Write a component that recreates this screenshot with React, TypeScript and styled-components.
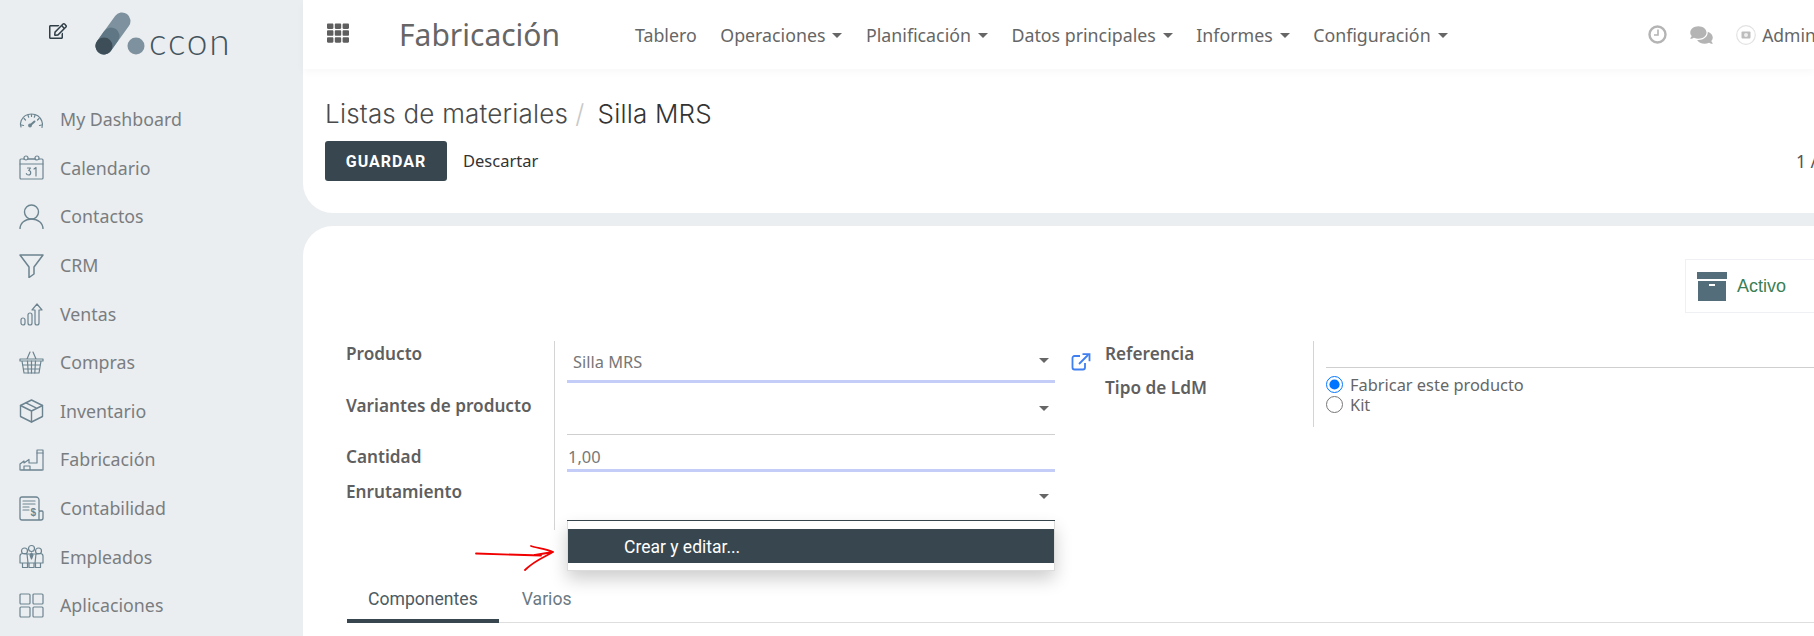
import React from 'react';
import styled, { createGlobalStyle } from 'styled-components';
import { FaTh, FaRegEdit, FaComments } from 'react-icons/fa';

const Global = createGlobalStyle`
  html, body { margin: 0; padding: 0; background: #ebeef1; overflow: hidden; }
  body { font-family: "Noto Sans", "Open Sans", sans-serif; }
  #root { width: 1814px; height: 636px; }
`;

const Page = styled.div`
  display: flex;
  width: 1814px;
  height: 636px;
  overflow: hidden;
  background: #ebeef1;
`;

const Sidebar = styled.aside`
  width: 303px;
  flex: none;
  display: flex;
  flex-direction: column;
`;

const LogoRow = styled.div`
  height: 95px;
  display: flex;
  align-items: flex-start;
  padding-left: 49px;
  box-sizing: border-box;
`;

const EditIcon = styled(FaRegEdit)`
  width: 18px;
  height: 16px;
  margin-top: 23px;
  color: #2f3e47;
`;

const LogoMark = styled.svg`
  width: 50px;
  height: 60px;
  margin-left: 28px;
  margin-top: 8px;
  flex: none;
`;

const LogoText = styled.span`
  font-family: "Lato", sans-serif;
  font-weight: 300;
  font-size: 37px;
  line-height: 1;
  letter-spacing: 1.8px;
  color: #43545e;
  margin-left: 4px;
  margin-top: 22px;
`;

const Menu = styled.nav`
  display: flex;
  flex-direction: column;
`;

const MenuItem = styled.div`
  height: 48.6px;
  display: flex;
  align-items: center;
  padding-left: 19px;
  gap: 16px;
  font-size: 17.8px;
  color: #7a7d80;
`;

const MenuIcon = styled.svg`
  width: 25px;
  height: 25px;
  flex: none;
  fill: none;
  stroke: #6c8490;
  stroke-width: 1.2;
  stroke-linecap: round;
  stroke-linejoin: round;
`;

const Main = styled.main`
  flex: 1;
  min-width: 0;
  display: flex;
  flex-direction: column;
`;

const TopBar = styled.header`
  height: 69px;
  flex: none;
  background: #fff;
  display: flex;
  align-items: center;
  white-space: nowrap;
  position: relative;
  z-index: 1;
  box-shadow: 0 3px 8px rgba(0, 0, 0, 0.03);
`;

const GridIcon = styled(FaTh)`
  width: 22px;
  height: 22px;
  margin-left: 24px;
  margin-top: -4px;
  flex: none;
  color: #5f5f5f;
`;

const AppName = styled.div`
  font-size: 30px;
  color: #666;
  margin-left: 50px;
  width: 236px;
  flex: none;
`;

const NavItem = styled.div`
  font-size: 17.8px;
  color: #666;
  display: flex;
  align-items: center;
  margin-right: 23.5px;
`;

const Caret = styled.i`
  display: inline-block;
  width: 0;
  height: 0;
  border-left: 5px solid transparent;
  border-right: 5px solid transparent;
  border-top: 5px solid #666;
  margin-left: 7px;
  margin-top: 2px;
`;

const Systray = styled.div`
  display: flex;
  align-items: center;
  margin-left: 177px;
  color: #b4b4b4;
`;

const ChatIcon = styled(FaComments)`
  width: 23px;
  height: 20px;
  margin-left: 23px;
`;

const AvatarIcon = styled.svg`
  width: 20px;
  height: 20px;
  margin-left: 23px;
`;

const UserName = styled.span`
  margin-left: 6px;
  font-size: 17.5px;
  color: #666;
`;

const ControlPanel = styled.section`
  height: 144px;
  flex: none;
  box-sizing: border-box;
  background: #fff;
  border-bottom-left-radius: 30px;
  padding: 28px 0 0 22px;
`;

const Breadcrumb = styled.div`
  height: 44px;
  display: flex;
  align-items: baseline;
  font-family: "Inter", sans-serif;
  font-weight: 300;
  font-size: 26px;
  letter-spacing: 0.2px;
  line-height: 34px;
  color: #4a4a4a;
  white-space: nowrap;
`;

const Slash = styled.span`
  color: #c8c8c8;
  margin: 0 13px 0 7px;
`;

const Current = styled.span`
  color: #333;
`;

const ActionRow = styled.div`
  display: flex;
  align-items: center;
`;

const SaveButton = styled.button`
  width: 122px;
  height: 40px;
  flex: none;
  border: none;
  border-radius: 3px;
  background: #38474f;
  color: #fff;
  font-family: "Roboto", sans-serif;
  font-weight: 700;
  font-size: 16px;
  letter-spacing: 1px;
  padding: 0;
`;

const DiscardButton = styled.span`
  font-family: "Noto Sans", sans-serif;
  font-size: 16.5px;
  color: #333;
  margin: 0 0 2px 16px;
  width: 1333px;
  flex: none;
`;

const Pager = styled.span`
  font-size: 17.5px;
  color: #555;
  white-space: nowrap;
`;

const FormCard = styled.section`
  margin-top: 13px;
  flex: 1;
  min-height: 0;
  background: #fff;
  border-top-left-radius: 30px;
  padding-top: 33px;
  box-sizing: border-box;
`;

const ButtonBox = styled.div`
  display: flex;
  justify-content: flex-end;
`;

const StatButton = styled.div`
  width: 129px;
  height: 54px;
  box-sizing: border-box;
  border: 1px solid #eef0f3;
  border-right: none;
  display: flex;
  align-items: center;
  padding-left: 11px;
  gap: 10px;
  font-family: "Liberation Sans", sans-serif;
  font-size: 18px;
  color: #3b7f55;
`;

const Sheet = styled.div`
  display: flex;
  align-items: flex-start;
  margin-top: 28px;
  padding-left: 44px;
`;

const LeftGroup = styled.div`
  width: 708px;
  flex: none;
  display: grid;
  grid-template-columns: 208px 1fr;
  grid-template-rows: 42px 52px 37px 58px;
  position: relative;
`;

const RightGroup = styled.div`
  margin-left: 15px;
  flex: 1;
  display: grid;
  grid-template-columns: 208px 1fr;
  grid-template-rows: 27px 59px;
`;

const Label = styled.div<{ $top: number }>`
  font-weight: 600;
  font-size: 17.2px;
  line-height: 22px;
  color: #5f5f5f;
  border-right: 1px solid #d4d4d4;
  padding-top: ${(p) => p.$top}px;
  box-sizing: border-box;
  white-space: nowrap;
  margin-left: -1px;
`;

const Field = styled.div<{ $line: 'blue' | 'gray' | 'dark'; $h: number; $pad: number; $in: number }>`
  margin-left: ${(p) => p.$in}px;
  height: ${(p) => p.$h}px;
  box-sizing: border-box;
  display: flex;
  align-items: center;
  justify-content: space-between;
  padding: 0 ${(p) => (p.$pad ? 6 : 0)}px 0 ${(p) => p.$pad}px;
  border-bottom: ${(p) =>
    p.$line === 'blue' ? '3px solid #c3cdf8' : p.$line === 'dark' ? '1px solid #38474f' : '1px solid #cfcfcf'};
  font-size: 16.4px;
  color: #777;
  position: relative;
`;

const FieldValue = styled.span<{ $top: number }>`
  margin-top: ${(p) => p.$top}px;
`;

const FieldCaret = styled(Caret)`
  margin: 0;
`;

const Dropdown = styled.div`
  position: absolute;
  z-index: 2;
  left: 0;
  right: 0;
  top: calc(100% + 1px);
  box-sizing: border-box;
  height: 50px;
  padding: 8px 0 7px;
  background: #fff;
  border: 1px solid #dcdcdc;
  border-top: none;
  box-shadow: 0 8px 18px rgba(0, 0, 0, 0.2);
`;

const DropdownItem = styled.div`
  height: 34px;
  background: #38474f;
  color: #fff;
  font-family: "Roboto", sans-serif;
  font-size: 17.5px;
  line-height: 36px;
  padding-left: 56px;
`;

const Arrow = styled.svg`
  position: absolute;
  left: 128px;
  top: 203px;
  width: 82px;
  height: 28px;
  fill: none;
  stroke: #f00000;
  stroke-width: 1.8;
  stroke-linecap: round;
  stroke-linejoin: round;
`;

const ExternalIcon = styled.svg`
  width: 20px;
  height: 18px;
  flex: none;
  margin: 12px 0 0 16px;
  fill: none;
  stroke: #3f7ff0;
  stroke-width: 1.8;
`;

const RadioList = styled.div`
  margin-left: 12px;
  padding-top: 6px;
  display: flex;
  flex-direction: column;
`;

const RadioRow = styled.label`
  display: flex;
  align-items: center;
  height: 20px;
  gap: 7px;
  font-size: 16.4px;
  color: #666;
`;

const Radio = styled.input`
  width: 17px;
  height: 17px;
  margin: 0;
  flex: none;
`;

const Tabs = styled.div`
  margin: 47px 0 0 44px;
  height: 46px;
  box-sizing: border-box;
  border-bottom: 1px solid #dedede;
  display: flex;
  gap: 2px;
  font-family: "Roboto", sans-serif;
  font-size: 17.6px;
`;

const Tab = styled.div<{ $active?: boolean }>`
  height: 46px;
  box-sizing: border-box;
  padding: 0 21px;
  line-height: 44px;
  color: ${(p) => (p.$active ? '#4c5b63' : '#6b7a83')};
  border-bottom: ${(p) => (p.$active ? '4px solid #38474f' : 'none')};
`;

const menu: { label: string; icon: React.ReactNode }[] = [
  { label: 'My Dashboard', icon: (<><path d="M2 20c-.8-2-.8-4 .2-6.500C4 9.500 8 7 12.500 7s8.500 2.500 10.300 7c1 2.500 1 4.500.2 6.500" /><path d="M2.500 18l2 .5M20.500 18.500l2-.5M5 11.500l1.500 1.500M20 11.500L18.500 13M9 8.200l.7 2M16 8.200l-.7 2M12.500 7.500v2" /><path d="M11 18.500l4.500-4" strokeWidth="2" /><circle cx="11" cy="18.500" r="1.300" /></>) },
  { label: 'Calendario', icon: (<><rect x="1" y="4" width="23" height="20" rx="1" /><path d="M1 9h23M5 4h15" /><circle cx="7" cy="3" r="2" fill="#ebeef1" /><circle cx="18" cy="3" r="2" fill="#ebeef1" /><path d="M8.500 13h3l-1.800 2.500c1.500 0 2 .8 2 2.200s-1 2.300-2.200 2.300-2-.5-2.200-1.500M15 14l2-1.500V21" /></>) },
  { label: 'Contactos', icon: (<><circle cx="12.500" cy="8" r="7" strokeWidth="1.400" /><path d="M1 25c0-6 5-10 11.500-10S24 19 24 25" strokeWidth="1.400" /></>) },
  { label: 'CRM', icon: (<path d="M1 2h23l-9 12v7l-5 3.500V14z" strokeWidth="1.500" />) },
  { label: 'Ventas', icon: (<><rect x="2" y="17" width="4" height="7" rx="2" /><rect x="9" y="12" width="4" height="12" rx="2" /><path d="M16 9v13a2 2 0 0 0 4 0V9h3l-5-6-5 6z" /></>) },
  { label: 'Compras', icon: (<><path d="M1 9h23v2H1zM3 11l2 12h15l2-12M8 9l3-7M17 9l-3-7" /><path d="M4 15h17M4.500 19h16M8.500 11l.7 12M12.500 11v12M16.500 11l-.7 12" /></>) },
  { label: 'Inventario', icon: (<><path d="M1.500 7.500L12.500 2l11 5.500v11l-11 5.500-11-5.500z" strokeWidth="1.400" /><path d="M1.500 7.500l11 5.500 11-5.500M12.500 13v11M7 4.800l11 5.500" strokeWidth="1.400" /></>) },
  { label: 'Fabricación', icon: (<><path d="M1 23v-6l4-3v2l5-3.500V16h8V3h6v20z" /><path d="M5 23v-4h6v4M18 6h6M2 23h21" /></>) },
  { label: 'Contabilidad', icon: (<><path d="M20 15V4a3 3 0 0 0-3-3H3a2 2 0 0 0-2 2v19a2 2 0 0 0 2 2h19a2 2 0 0 0 2-2v-6a1 1 0 0 0-1-1h-1.500a1.500 1.500 0 0 0-1.500 1.500V24" strokeWidth="1.300" /><path d="M4 5h12M4 8h12M4 11h6M4 14h6" /><text x="11.500" y="20" fontFamily="Liberation Sans, sans-serif" fontWeight="700" fontSize="10" fill="#6c8490" stroke="none">$</text></>) },
  { label: 'Empleados', icon: (<><circle cx="5.500" cy="7" r="3" /><circle cx="12.500" cy="4.500" r="3" /><circle cx="19.500" cy="7" r="3" /><path d="M1 12c0-1.500 1.500-2.500 3-2.500h3M24 12c0-1.500-1.500-2.500-3-2.500h-3M1 12v7h23v-7M3.500 19v4.500h5V19M10 19v4.500h5V19M16.500 19v4.500h5V19M8 10l1 9M17 10l-1 9M7 10h11" /><path d="M12.500 9l-1.500 2 1.500 4 1.500-4z" fill="#6c8490" /></>) },
  { label: 'Aplicaciones', icon: (<><rect x="1" y="1" width="10" height="10" rx="1" /><rect x="14" y="1" width="10" height="10" rx="1" /><rect x="1" y="14" width="10" height="10" rx="1" /><rect x="14" y="14" width="10" height="10" rx="1" /></>) },
];

const nav = ['Operaciones', 'Planificación', 'Datos principales', 'Informes', 'Configuración'];

export default function App() {
  return (
    <Page>
      <Global />
      <Sidebar>
        <LogoRow>
          <EditIcon />
          <LogoMark viewBox="0 0 50 60">
            <line x1="9" y1="38" x2="27" y2="13" stroke="#7d929e" strokeWidth="17" strokeLinecap="round" />
            <line x1="9" y1="38" x2="16" y2="28" stroke="#5f7784" strokeWidth="17" strokeLinecap="round" />
            <circle cx="9" cy="38" r="8.500" fill="#3d4e58" />
            <circle cx="41" cy="38" r="8.500" fill="#7d929e" />
          </LogoMark>
          <LogoText>ccon</LogoText>
        </LogoRow>
        <Menu>
          {menu.map((m) => (
            <MenuItem key={m.label}>
              <MenuIcon viewBox="0 0 25 25">{m.icon}</MenuIcon>
              {m.label}
            </MenuItem>
          ))}
        </Menu>
      </Sidebar>
      <Main>
        <TopBar>
          <GridIcon />
          <AppName>Fabricación</AppName>
          <NavItem>Tablero</NavItem>
          {nav.map((n) => (
            <NavItem key={n}>
              {n}
              <Caret />
            </NavItem>
          ))}
          <Systray>
            <svg width="19" height="19" viewBox="0 0 19 19" fill="none" stroke="#b4b4b4" strokeWidth="2.400">
              <circle cx="9.500" cy="9.500" r="8" />
              <path d="M10 4.500v5.500H6" strokeWidth="1.600" />
            </svg>
            <ChatIcon />
            <AvatarIcon viewBox="0 0 20 20">
              <circle cx="10" cy="10" r="9.300" fill="#fff" stroke="#e2e2e2" strokeWidth="1.200" />
              <rect x="5.500" y="6.500" width="9" height="7" rx="1" fill="#bdbdbd" />
              <circle cx="10" cy="10" r="2" fill="#eee" />
            </AvatarIcon>
            <UserName>Administrator</UserName>
          </Systray>
        </TopBar>
        <ControlPanel>
          <Breadcrumb>
            Listas de materiales<Slash>/</Slash>
            <Current>Silla MRS</Current>
          </Breadcrumb>
          <ActionRow>
            <SaveButton>GUARDAR</SaveButton>
            <DiscardButton>Descartar</DiscardButton>
            <Pager>1 / 1</Pager>
          </ActionRow>
        </ControlPanel>
        <FormCard>
          <ButtonBox>
            <StatButton>
              <svg width="30" height="29" viewBox="0 0 30 29">
                <rect x="0" y="0" width="30" height="7" fill="#546d7a" />
                <rect x="1" y="9" width="28" height="20" fill="#546d7a" />
                <rect x="12" y="12" width="6" height="2" fill="#fff" />
              </svg>
              Activo
            </StatButton>
          </ButtonBox>
          <Sheet>
            <LeftGroup>
              <Label $top={2}>Producto</Label>
              <Field $line="blue" $h={42} $in={12} $pad={6}>
                <FieldValue $top={1}>Silla MRS</FieldValue>
                <FieldCaret />
              </Field>
              <Label $top={12}>Variantes de producto</Label>
              <Field $line="gray" $h={52} $in={12} $pad={6}>
                <span />
                <FieldCaret />
              </Field>
              <Label $top={11}>Cantidad</Label>
              <Field $line="blue" $h={37} $in={12} $pad={1}>
                <FieldValue $top={8}>1,00</FieldValue>
              </Field>
              <Label $top={9}>Enrutamiento</Label>
              <Field $line="dark" $h={49} $in={12} $pad={6}>
                <span />
                <FieldCaret />
                <Dropdown>
                  <DropdownItem>Crear y editar...</DropdownItem>
                </Dropdown>
              </Field>
              <Arrow viewBox="0 0 82 28">
                <path d="M1 9.500 L66 11.500 M56 2 C62 4 72 5 78 8 C70 13 60 16 50 26 M78 8 L60 11" />
              </Arrow>
            </LeftGroup>
            <ExternalIcon viewBox="0 0 20 18">
              <path d="M9 3H3.500A2 2 0 0 0 1.500 5v9.500a2 2 0 0 0 2 2H12a2 2 0 0 0 2-2V10" />
              <path d="M8 11L17 2M11.500 1.200h7v7" />
            </ExternalIcon>
            <RightGroup>
              <Label $top={2}>Referencia</Label>
              <Field $line="gray" $h={27} $in={12} $pad={0} />
              <Label $top={9}>Tipo de LdM</Label>
              <RadioList>
                <RadioRow>
                  <Radio type="radio" name="t" defaultChecked />
                  Fabricar este producto
                </RadioRow>
                <RadioRow>
                  <Radio type="radio" name="t" />
                  Kit
                </RadioRow>
              </RadioList>
            </RightGroup>
          </Sheet>
          <Tabs>
            <Tab $active>Componentes</Tab>
            <Tab>Varios</Tab>
          </Tabs>
        </FormCard>
      </Main>
    </Page>
  );
}
